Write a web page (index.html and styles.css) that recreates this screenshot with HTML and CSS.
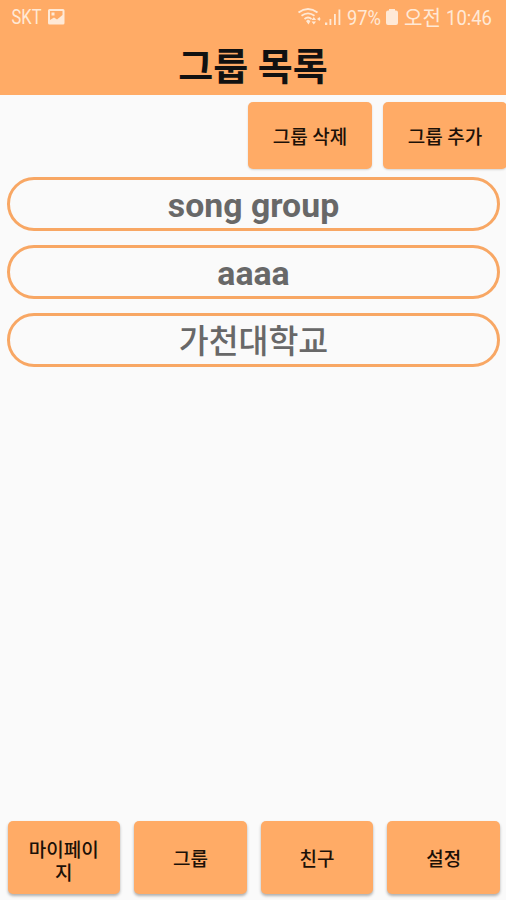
FILE: index.html
```html
<!DOCTYPE html>
<html lang="ko">
<head>
    <meta charset="UTF-8">
    <title>그룹 목록</title>
    <link rel="stylesheet" href="styles.css">
</head>
<body>
    <div class="status">
        <svg class="carrier" width="72" height="34" viewBox="0 0 72 34">
            <text x="11.500" y="24" textLength="30" lengthAdjust="spacingAndGlyphs">SKT</text>
            <path fill-rule="evenodd" d="M49.500 9h13.500q1.500 0 1.500 1.500v12.500q0 1.500-1.500 1.500H49.500q-1.500 0-1.500-1.500V10.500q0-1.500 1.500-1.500zM50 11v9l4-2.500 3 2 5.500-4.500v-4zM51.500 12.500h3v3h-3z"/>
        </svg>
        <svg class="signal" width="216" height="34" viewBox="0 0 216 34">
            <g class="wifi">
                <path d="M8.500 12.500q9.500-7 19 0M11.500 15.800q6.500-5 13 0M14.500 19q3.500-3 7 0"/>
            </g>
            <path d="M16 21l2-1.500 2.500 1.500-2 3.500zM21.500 20l2.300-3 2.300 3zM21.500 21.500h4.600l-2.300 3zM27 19l2.500-2 1 2-1 2z"/>
            <path d="M35 22.500h2.300v2.500H35zM39.500 19h1.800v6h-1.800zM44 14h1.800v11H44zM48.500 9.500h1.800V25h-1.800z"/>
            <text x="57" y="25" textLength="34" lengthAdjust="spacingAndGlyphs">97%</text>
            <path d="M99 9h6v1.500h1q2 0 2 2v10.500q0 2-2 2h-8q-2 0-2-2V12.500q0-2 2-2h1z"/>
            <text x="114" y="25" textLength="37" lengthAdjust="spacingAndGlyphs">오전</text>
            <text x="156" y="25" textLength="46" lengthAdjust="spacingAndGlyphs">10:46</text>
        </svg>
    </div>
    <h1 class="title">그룹 목록</h1>

    <div class="actions">
        <button class="btn">그룹 삭제</button>
        <button class="btn">그룹 추가</button>
    </div>

    <div class="groups">
        <div class="group">song group</div>
        <div class="group">aaaa</div>
        <div class="group korean">가천대학교</div>
    </div>

    <div class="menu">
        <button class="btn mypage">마이페이<br>지</button>
        <button class="btn">그룹</button>
        <button class="btn">친구</button>
        <button class="btn">설정</button>
    </div>
</body>
</html>
```

FILE: styles.css
```css
* {
    box-sizing: border-box;
}

body {
    margin: 0;
    height: 900px;
    display: flex;
    flex-direction: column;
    overflow: hidden;
    background-color: #fafafa;
    font-family: Roboto, "Noto Sans CJK KR", sans-serif;
}

.status {
    display: flex;
    justify-content: space-between;
    height: 34px;
    background-color: #ffab66;
}

.status svg {
    display: block;
    fill: #ffe9d6;
    font-size: 21px;
}

.status .wifi {
    fill: none;
    stroke: #ffe9d6;
    stroke-width: 1.8;
}

.title {
    margin: 0;
    height: 61px;
    line-height: 67px;
    text-align: center;
    font-size: 38px;
    font-weight: bold;
    color: #111;
    background-color: #ffab66;
}

.actions {
    display: flex;
    justify-content: flex-end;
    gap: 11px;
    padding-top: 7px;
    margin-right: -1px;
}

.btn {
    border: none;
    padding: 4px 0 0;
    border-radius: 5px;
    background-color: #ffab66;
    box-shadow: 0 1px 2px rgba(0, 0, 0, 0.15);
    font-family: Roboto, "Noto Sans CJK KR", sans-serif;
    font-size: 19px;
    font-weight: 500;
    line-height: 23px;
    color: #1c1108;
}

.actions .btn {
    width: 124px;
    height: 67px;
}

.groups {
    display: flex;
    flex-direction: column;
    gap: 14px;
    padding: 8px 6px 0 7px;
}

.group {
    height: 54px;
    line-height: 52px;
    border: 3px solid #f8a764;
    border-radius: 27px;
    text-align: center;
    font-size: 33.8px;
    font-weight: bold;
    color: #686868;
}

.korean {
    font-size: 32.5px;
    font-weight: 500;
}

.menu {
    display: grid;
    grid-template-columns: repeat(4, 1fr);
    gap: 14px;
    margin-top: auto;
    padding: 0 6px 6px 7.5px;
}

.menu .btn {
    height: 73px;
    box-shadow: 0 2px 3px rgba(0, 0, 0, 0.3);
}

.menu .mypage {
    padding-top: 8px;
}
```
